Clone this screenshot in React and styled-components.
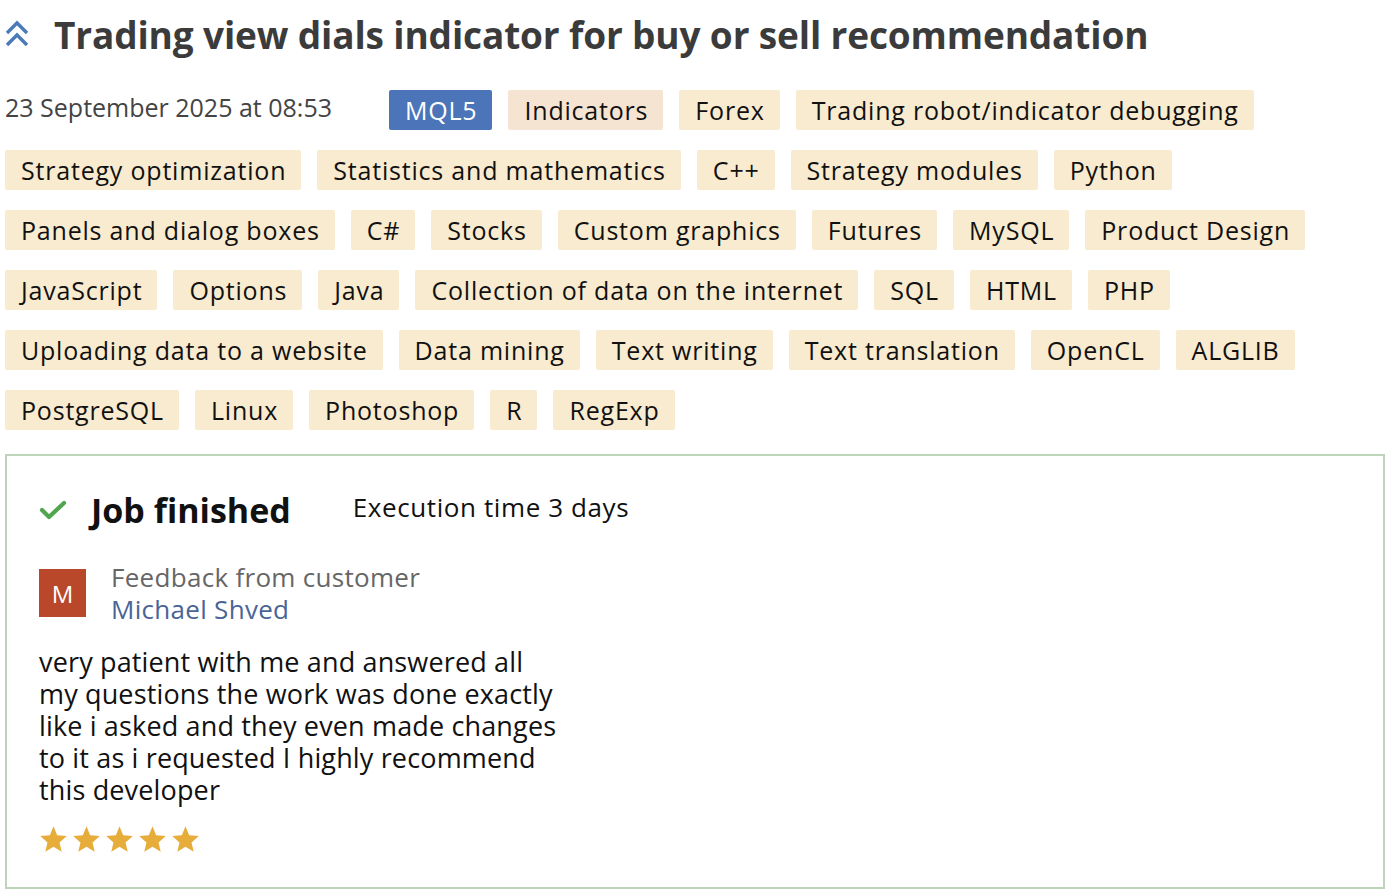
import React from "react";
import styled, { createGlobalStyle } from "styled-components";

const Global = createGlobalStyle`
  html, body { margin: 0; padding: 0; background: #fff; }
  body { font-family: "Open Sans", "DejaVu Sans", sans-serif; color: #111; }
`;

const Page = styled.div`
  padding: 0 3px 0 5px;
`;

const Header = styled.h1`
  display: flex;
  align-items: center;
  gap: 25px;
  margin: 0;
  height: 68px;
  font-size: 37px;
  font-weight: 700;
  letter-spacing: -0.14px;
  color: #3b3b3b;
`;

const Meta = styled.div`
  display: flex;
  flex-wrap: wrap;
  gap: 20px 16px;
  margin-top: 22px;
`;

const DateText = styled.span`
  font-size: 25px;
  color: #444;
  height: 40px;
  line-height: 34px;
  margin-right: 41px;
`;

const Tag = styled.span`
  display: inline-flex;
  align-items: center;
  height: 40px;
  padding: 0 15px 0 16px;
  border-radius: 2px;
  font-size: 25px;
  letter-spacing: 0.8px;
  background: ${(p) =>
    p.$variant === "primary" ? "#4b74b9" : p.$variant === "accent" ? "#f6e4d3" : "#f8ebcf"};
  color: ${(p) => (p.$variant === "primary" ? "#fff" : "#111")};
`;

const Box = styled.section`
  margin-top: 24px;
  border: 2px solid #bcd5b8;
  padding: 28px 32px 34px 32px;
`;

const StatusRow = styled.div`
  display: flex;
  align-items: center;
  height: 52px;
`;

const Status = styled.span`
  display: flex;
  align-items: center;
  gap: 24px;
  font-size: 34px;
  font-weight: 700;
  color: #111;
  margin-right: 62px;
`;

const Duration = styled.span`
  font-size: 26px;
  letter-spacing: 0.6px;
  color: #111;
  margin-top: -6px;
`;

const Author = styled.div`
  display: flex;
  align-items: center;
  gap: 25px;
  margin-top: 25px;
`;

const Avatar = styled.div`
  width: 47px;
  height: 48px;
  background: #b9472a;
  color: #fff;
  display: flex;
  align-items: center;
  justify-content: center;
  font-size: 24px;
`;

const AuthorText = styled.div`
  display: flex;
  flex-direction: column;
  font-size: 26px;
  line-height: 32px;
  letter-spacing: 0.3px;
`;

const Caption = styled.span`
  color: #666;
`;

const Name = styled.a`
  color: #4a6496;
  text-decoration: none;
`;

const Review = styled.p`
  margin: 21px 0 0;
  max-width: 524px;
  font-size: 27px;
  line-height: 32px;
  letter-spacing: 0.15px;
  color: #111;
`;

const Stars = styled.div`
  display: flex;
  gap: 4px;
  margin-top: 19px;
`;

const tags = [
  ["MQL5", "primary"],
  ["Indicators", "accent"],
  ["Forex"],
  ["Trading robot/indicator debugging"],
  ["Strategy optimization"],
  ["Statistics and mathematics"],
  ["C++"],
  ["Strategy modules"],
  ["Python"],
  ["Panels and dialog boxes"],
  ["C#"],
  ["Stocks"],
  ["Custom graphics"],
  ["Futures"],
  ["MySQL"],
  ["Product Design"],
  ["JavaScript"],
  ["Options"],
  ["Java"],
  ["Collection of data on the internet"],
  ["SQL"],
  ["HTML"],
  ["PHP"],
  ["Uploading data to a website"],
  ["Data mining"],
  ["Text writing"],
  ["Text translation"],
  ["OpenCL"],
  ["ALGLIB"],
  ["PostgreSQL"],
  ["Linux"],
  ["Photoshop"],
  ["R"],
  ["RegExp"],
];

const DoubleChevron = () => (
  <svg width="24" height="28" viewBox="0 0 24 28" fill="none" stroke="#4a7ab8" strokeWidth="3.4">
    <path d="M2 13 L12 3 L22 13" />
    <path d="M2 25 L12 15 L22 25" />
  </svg>
);

const Check = () => (
  <svg width="28" height="22" viewBox="0 0 28 22" fill="none" stroke="#4fa64f" strokeWidth="4.2" strokeLinecap="round" strokeLinejoin="round">
    <path d="M3 11 L10 18 L25 4" />
  </svg>
);

const Star = () => (
  <svg width="29" height="28" viewBox="0 0 24 23">
    <path
      fill="#e6ad3b"
      d="M12 1 L15 8.3 L23 9 L17 14.3 L18.8 22 L12 18 L5.2 22 L7 14.3 L1 9 L9 8.3 Z"
    />
  </svg>
);

export default function App() {
  return (
    <Page>
      <Global />
      <Header>
        <DoubleChevron />
        Trading view dials indicator for buy or sell recommendation
      </Header>
      <Meta>
        <DateText>23 September 2025 at 08:53</DateText>
        {tags.map(([label, variant]) => (
          <Tag key={label} $variant={variant}>
            {label}
          </Tag>
        ))}
      </Meta>
      <Box>
        <StatusRow>
          <Status>
            <Check />
            Job finished
          </Status>
          <Duration>Execution time 3 days</Duration>
        </StatusRow>
        <Author>
          <Avatar>M</Avatar>
          <AuthorText>
            <Caption>Feedback from customer</Caption>
            <Name href="#">Michael Shved</Name>
          </AuthorText>
        </Author>
        <Review>
          very patient with me and answered all my questions the work was done exactly like i asked and
          they even made changes to it as i requested I highly recommend this developer
        </Review>
        <Stars>
          {[0, 1, 2, 3, 4].map((i) => (
            <Star key={i} />
          ))}
        </Stars>
      </Box>
    </Page>
  );
}
